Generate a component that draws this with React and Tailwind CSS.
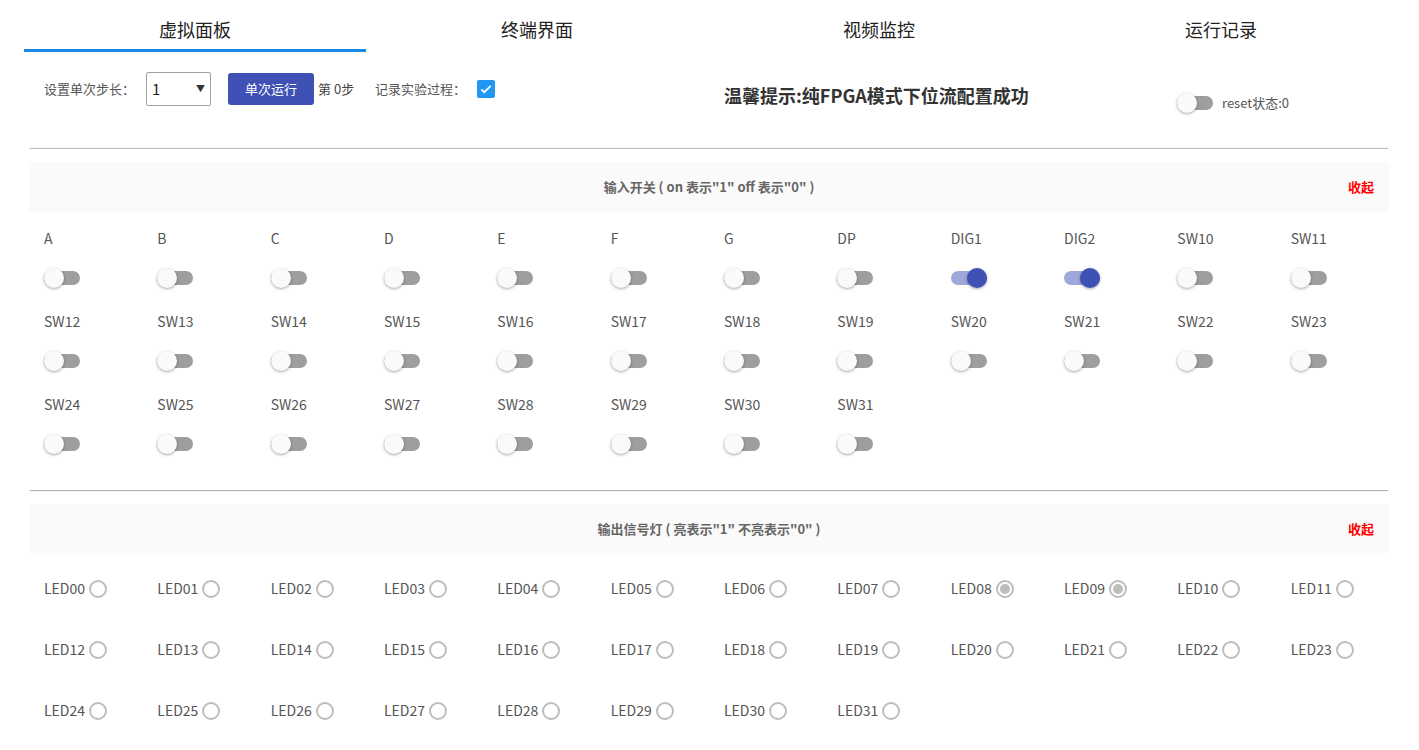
import React, { useState } from 'react';

const tabs = ['虚拟面板', '终端界面', '视频监控', '运行记录'];

const switchNames = [
  'A', 'B', 'C', 'D', 'E', 'F', 'G', 'DP', 'DIG1', 'DIG2', 'SW10', 'SW11',
  'SW12', 'SW13', 'SW14', 'SW15', 'SW16', 'SW17', 'SW18', 'SW19', 'SW20', 'SW21', 'SW22', 'SW23',
  'SW24', 'SW25', 'SW26', 'SW27', 'SW28', 'SW29', 'SW30', 'SW31',
];

const leds = Array.from({ length: 32 }, (_, i) => 'LED' + String(i).padStart(2, '0'));

function Toggle({ on, onClick }) {
  return (
    <button onClick={onClick} className="relative w-[36px] h-[24px] flex items-center">
      <span className={`block w-[36px] h-[14px] rounded-full ${on ? 'bg-[#9fa8da]' : 'bg-[#9e9e9e]'}`} />
      <span
        className={`absolute top-[2px] w-[20px] h-[20px] rounded-full shadow-[0_1px_3px_rgba(0,0,0,0.35)] ${
          on ? 'left-[16px] bg-[#3f51b5]' : 'left-0 bg-[#fafafa]'
        }`}
      />
    </button>
  );
}

function Led({ lit }) {
  return (
    <span className="w-[18px] h-[18px] rounded-full border-2 border-[#bdbdbd] flex items-center justify-center">
      {lit && <span className="w-[10px] h-[10px] rounded-full bg-[#bdbdbd]" />}
    </span>
  );
}

function PanelHeader({ title, h }) {
  return (
    <div className={`${h} bg-[#fafafa] flex items-center relative`}>
      <div className="flex-1 text-center text-[13px] font-bold text-[#666]">{title}</div>
      <span className="absolute right-[15px] text-[13px] font-bold text-[#ff0000]">收起</span>
    </div>
  );
}

export default function App() {
  const [switches, setSwitches] = useState(() => {
    const s = {};
    switchNames.forEach((n) => (s[n] = n === 'DIG1' || n === 'DIG2'));
    return s;
  });
  const [reset, setReset] = useState(false);
  const [record, setRecord] = useState(true);
  const lit = ['LED08', 'LED09'];

  return (
    <div className="w-[1419px] h-[750px] overflow-hidden bg-white text-[#333] font-['Noto_Sans_CJK_SC','Noto_Sans',sans-serif]">
      {/* Tabs */}
      <div className="ml-[24px] mr-[27px] flex">
        {tabs.map((t, i) => (
          <div
            key={t}
            className={`w-[342px] h-[52px] pt-[9px] flex items-center justify-center text-[18px] border-b-[3px] ${
              i === 0 ? 'border-[#1a87e6] text-[#222]' : 'border-transparent text-[#222]'
            }`}
          >
            {t}
          </div>
        ))}
      </div>

      {/* Controls */}
      <div className="h-[97px] pl-[44px] flex">
        <div className="w-[680px] flex items-center h-[34px] mt-[20px] text-[13px] text-[#555]">
          <span className="w-[102px]">设置单次步长：</span>
          <div className="w-[65px] h-[34px] border border-[#a0a0a0] rounded-[2px] flex items-center justify-between px-[5px] text-[15px] text-[#222]">
            <span>1</span>
            <span className="text-[9px] text-[#333]">▼</span>
          </div>
          <button className="ml-[17px] w-[86px] h-[32px] bg-[#3f51b5] rounded-[3px] text-white text-[13px]">单次运行</button>
          <span className="ml-[4px] w-[57px] text-[#444]">第 0步</span>
          <span className="w-[102px]">记录实验过程：</span>
          <button
            onClick={() => setRecord(!record)}
            className={`w-[18px] h-[18px] rounded-[2px] flex items-center justify-center ${record ? 'bg-[#2196f3]' : 'border-2 border-[#888]'}`}
          >
            {record && (
              <svg width="14" height="14" viewBox="0 0 24 24" fill="none" stroke="white" strokeWidth="3">
                <path d="M4 12.5l5 5L20 6.5" />
              </svg>
            )}
          </button>
        </div>
        <div className="w-[453px] mt-[28px] text-[18px] font-bold text-[#333] leading-[30px]">
          温馨提示:纯FPGA模式下位流配置成功
        </div>
        <div className="flex items-center h-[24px] mt-[39px]">
          <Toggle on={reset} onClick={() => setReset(!reset)} />
          <span className="ml-[9px] text-[13px] text-[#555]">reset状态:0</span>
        </div>
      </div>

      {/* Input switches */}
      <div className="ml-[29px] mr-[30px] pt-[13px] pb-[13px] shadow-[0_2px_1px_-1px_rgba(0,0,0,0.3),0_-2px_1px_-1px_rgba(0,0,0,0.25)]">
        <PanelHeader h="h-[50px]" title={'输入开关 ( on 表示"1" off 表示"0" )'} />
        <div className="pt-[16px] grid grid-cols-12">
          {switchNames.map((n) => (
            <div key={n} className="h-[83px] pl-[15px] flex flex-col">
              <span className="h-[20px] leading-[20px] text-[14px] text-[#555]">{n}</span>
              <div className="mt-[18px]">
                <Toggle on={switches[n]} onClick={() => setSwitches({ ...switches, [n]: !switches[n] })} />
              </div>
            </div>
          ))}
        </div>
      </div>

      {/* Output LEDs */}
      <div className="mt-[1px] ml-[29px] mr-[30px] pt-[13px] pb-[13px]">
        <PanelHeader h="h-[49px]" title={'输出信号灯 ( 亮表示"1" 不亮表示"0" )'} />
        <div className="pt-[5px] grid grid-cols-12">
          {leds.map((n) => (
            <div key={n} className="h-[61px] pl-[15px] flex items-center gap-[4px]">
              <span className="text-[14px] text-[#555]">{n}</span>
              <Led lit={lit.includes(n)} />
            </div>
          ))}
        </div>
      </div>
    </div>
  );
}
